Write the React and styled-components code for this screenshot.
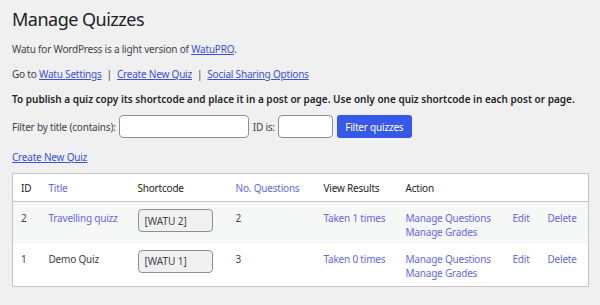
import React from "react";
import styled, { createGlobalStyle } from "styled-components";

const Global = createGlobalStyle`
  html, body { margin: 0; padding: 0; background: #f0f0f1; }
  body {
    font-family: "Noto Sans", "Open Sans", sans-serif;
    font-size: 10px;
    letter-spacing: -0.2px;
    color: #3c434a;
  }
`;

const Page = styled.div`
  padding: 0 12px;
  width: 576px;
`;

const Title = styled.h1`
  margin: 7px 0 0;
  font-size: 18px;
  line-height: 24px;
  font-weight: 400;
  letter-spacing: -0.5px;
  color: #1d2327;
`;

const Para = styled.p`
  margin: ${(p) => p.$top ?? 11}px 0 0;
  line-height: 14px;
  font-weight: ${(p) => (p.$bold ? 600 : 400)};
  letter-spacing: ${(p) => (p.$bold ? "0px" : "-0.2px")};
  color: ${(p) => (p.$bold ? "#1d2327" : "#3c434a")};
`;

const TopLink = styled.a`
  color: #3b4fe0;
  text-decoration: underline;
`;

const Sep = styled.span`
  margin: 0 5px;
`;

const FilterRow = styled.form`
  margin-top: 9px;
  display: flex;
  align-items: center;
  height: 23px;
`;

const Label = styled.span`
  margin-right: ${(p) => p.$mr ?? 3}px;
  white-space: nowrap;
`;

const TextInput = styled.input`
  box-sizing: border-box;
  flex: none;
  width: ${(p) => p.$w}px;
  height: 23px;
  border: 1px solid #8c8f94;
  border-radius: 4px;
  background: #fff;
  margin: 0 4px 0 0;
  padding: 0 6px;
  font: inherit;
`;

const Button = styled.button`
  box-sizing: border-box;
  flex: none;
  width: 75px;
  height: 23px;
  padding: 0;
  border: none;
  border-radius: 3px;
  background: #3858e9;
  color: #fff;
  font: inherit;
  letter-spacing: -0.2px;
`;

const Table = styled.table`
  margin-top: 9px;
  width: 577px;
  border-collapse: collapse;
  border: 1px solid #c3c4c7;
  background: #fff;
  table-layout: fixed;
`;

const Th = styled.th`
  text-align: left;
  font-weight: 400;
  color: #1d2327;
  height: 27px;
  padding: 0 0 0 8px;
  border-bottom: 1px solid #c3c4c7;
  vertical-align: middle;
  line-height: 14px;
  white-space: nowrap;
`;

const Row = styled.tr`
  background: ${(p) => (p.$alt ? "#f6f7f7" : "#fff")};
  height: ${(p) => p.$h}px;
`;

const Td = styled.td`
  padding: ${(p) => p.$pt}px 0 0 8px;
  vertical-align: top;
  line-height: 14px;
  color: #3c434a;
  white-space: nowrap;
`;

const CellLink = styled.a`
  color: #6468e8;
  text-decoration: none;
  display: ${(p) => (p.$block ? "block" : "inline")};
`;

const Code = styled.input`
  display: block;
  box-sizing: border-box;
  width: 75px;
  height: 23px;
  border: 1px solid #8c8f94;
  border-radius: 4px;
  background: #f0f0f1;
  color: #3c434a;
  padding: 0 6px;
  margin: -2px 0 0;
  font: inherit;
`;

const quizzes = [
  { id: 2, title: "Travelling quizz", link: true, q: 2, taken: 1, h: 42, pt: 9 },
  { id: 1, title: "Demo Quiz", link: false, q: 3, taken: 0, h: 43, pt: 8 },
];

export default function App() {
  return (
    <>
      <Global />
      <Page>
        <Title>Manage Quizzes</Title>
        <Para>
          Watu for WordPress is a light version of <TopLink href="#">WatuPRO</TopLink>.
        </Para>
        <Para>
          Go to <TopLink href="#">Watu Settings</TopLink>
          <Sep>|</Sep>
          <TopLink href="#">Create New Quiz</TopLink>
          <Sep>|</Sep>
          <TopLink href="#">Social Sharing Options</TopLink>
        </Para>
        <Para $bold>
          To publish a quiz copy its shortcode and place it in a post or page. Use only one quiz shortcode in each post or page.
        </Para>
        <FilterRow onSubmit={(e) => e.preventDefault()}>
          <Label>Filter by title (contains):</Label>
          <TextInput $w={130} />
          <Label>ID is:</Label>
          <TextInput $w={55} />
          <Button type="submit">Filter quizzes</Button>
        </FilterRow>
        <Para $top={12}>
          <TopLink href="#">Create New Quiz</TopLink>
        </Para>
        <Table>
          <colgroup>
            <col style={{ width: 28 }} />
            <col style={{ width: 89 }} />
            <col style={{ width: 98 }} />
            <col style={{ width: 88 }} />
            <col style={{ width: 82 }} />
            <col style={{ width: 107 }} />
            <col style={{ width: 35 }} />
            <col />
          </colgroup>
          <thead>
            <tr>
              <Th>ID</Th>
              <Th><CellLink href="#">Title</CellLink></Th>
              <Th>Shortcode</Th>
              <Th><CellLink href="#">No. Questions</CellLink></Th>
              <Th>View Results</Th>
              <Th>Action</Th>
              <Th />
              <Th />
            </tr>
          </thead>
          <tbody>
            {quizzes.map((q, i) => (
              <Row key={q.id} $alt={i === 0} $h={q.h}>
                <Td $pt={q.pt}>{q.id}</Td>
                <Td $pt={q.pt}>{q.link ? <CellLink href="#">{q.title}</CellLink> : q.title}</Td>
                <Td $pt={q.pt}><Code readOnly value={`[WATU ${q.id}]`} /></Td>
                <Td $pt={q.pt}>{q.q}</Td>
                <Td $pt={q.pt}><CellLink href="#">Taken {q.taken} times</CellLink></Td>
                <Td $pt={q.pt}>
                  <CellLink $block href="#">Manage Questions</CellLink>
                  <CellLink $block href="#">Manage Grades</CellLink>
                </Td>
                <Td $pt={q.pt}><CellLink href="#">Edit</CellLink></Td>
                <Td $pt={q.pt}><CellLink href="#">Delete</CellLink></Td>
              </Row>
            ))}
          </tbody>
        </Table>
      </Page>
    </>
  );
}
